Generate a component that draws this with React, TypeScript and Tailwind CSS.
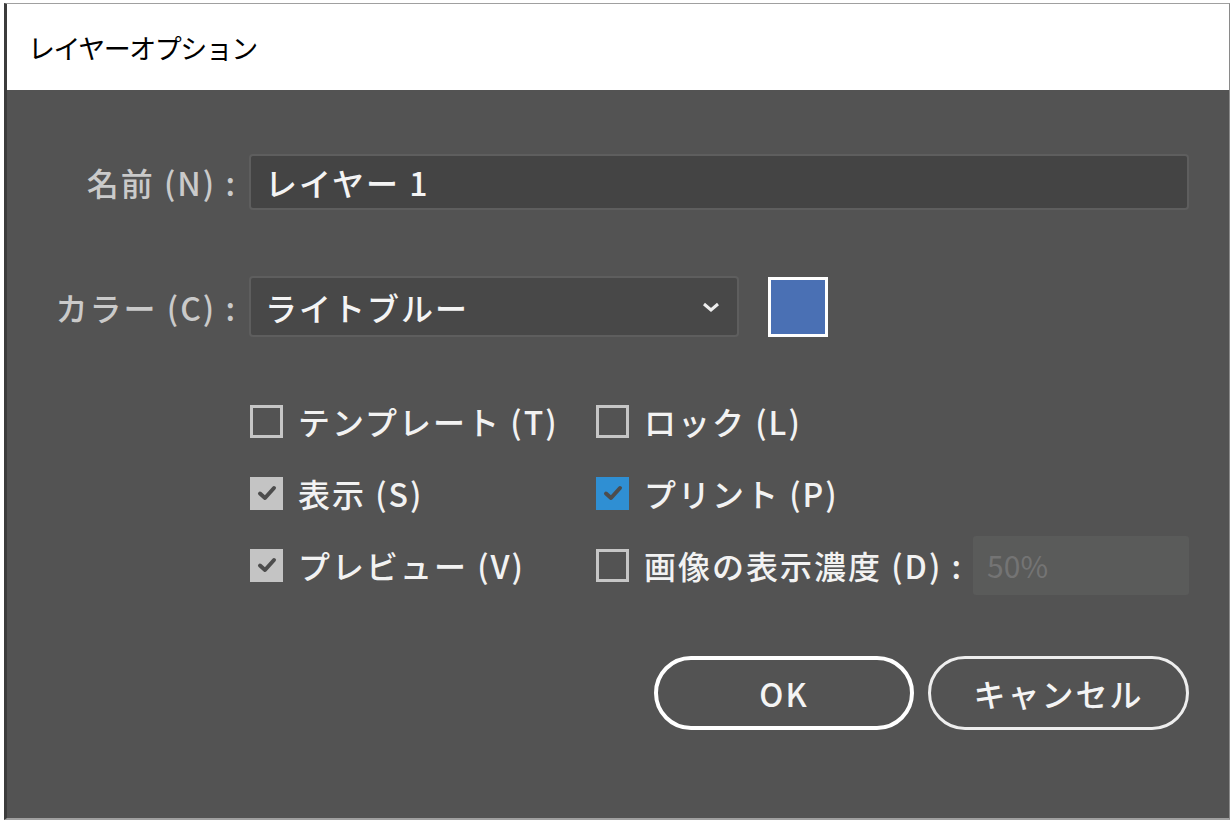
import React from 'react'

const jp = { fontFamily: '"Noto Sans CJK JP", "Noto Sans", sans-serif' }

function CheckBox({ state }: { state: 'off' | 'gray' | 'blue' }) {
  if (state === 'off') {
    return <span className="block h-[33px] w-[33px] shrink-0 border-[3px] border-[#c6c6c6]" />
  }
  const bg = state === 'blue' ? 'bg-[#2f8fd3]' : 'bg-[#c4c4c4]'
  return (
    <span className={`flex h-[33px] w-[33px] shrink-0 items-center justify-center ${bg}`}>
      <svg width="22" height="22" viewBox="0 0 22 22">
        <path d="M4 11.5 L9 16 L18 6" fill="none" stroke="#4d4d4d" strokeWidth="4" strokeLinecap="round" strokeLinejoin="round" />
      </svg>
    </span>
  )
}

function Option({ state, label }: { state: 'off' | 'gray' | 'blue'; label: string }) {
  return (
    <div className="flex items-center gap-[15px]">
      <CheckBox state={state} />
      <span className="whitespace-nowrap text-[32px] font-medium leading-none tracking-[2px] text-[#f2f2f2]">{label}</span>
    </div>
  )
}

export default function App() {
  return (
    <div className="h-[828px] w-[1232px] overflow-hidden bg-white pt-[3px] pl-[4px]" style={jp}>
      <div className="flex h-[817px] w-[1226px] flex-col border-t border-l-[3px] border-b-2 border-r border-t-[#a0a0a0] border-l-[#3c3c3c] border-b-[#a0a0a0] border-r-[#8a8a8a]">
        <div className="flex h-[86px] items-center bg-white pl-[21px]">
          <span className="text-[27px] leading-none tracking-[-1.5px] text-black">レイヤーオプション</span>
        </div>
        <div className="flex flex-1 flex-col bg-[#535353] pr-[40px] pt-[64px]">
          <div className="flex items-center">
            <div className="w-[232px] shrink-0 pr-[2px] text-right text-[32px] font-medium leading-none tracking-[2px] text-[#cacaca] whitespace-nowrap">名前 (N) :</div>
            <div className="ml-[10px] flex h-[56px] flex-1 items-center rounded-[4px] border-2 border-[#5e5e5e] bg-[#444444] pl-[14px] text-[32px] font-medium leading-none tracking-[2px] text-[#f4f4f4]">
              レイヤー 1
            </div>
          </div>

          <div className="mt-[66px] flex items-center">
            <div className="w-[232px] shrink-0 pr-[2px] text-right text-[32px] font-medium leading-none tracking-[2px] text-[#cacaca] whitespace-nowrap">カラー (C) :</div>
            <div className="ml-[10px] flex h-[61px] w-[490px] items-center justify-between rounded-[4px] border-2 border-[#5e5e5e] bg-[#484848] pl-[14px] pr-[16px]">
              <span className="text-[32px] font-medium leading-none tracking-[2px] text-[#f4f4f4]">ライトブルー</span>
              <svg width="20" height="12" viewBox="0 0 20 12">
                <path d="M3 3 L10 9 L17 3" fill="none" stroke="#eeeeee" strokeWidth="3" />
              </svg>
            </div>
            <div className="ml-[29px] h-[60px] w-[60px] border-[3px] border-white bg-[#4a70b4]" />
          </div>

          <div className="ml-[243px] mt-[48px] grid grid-cols-[346px_1fr] grid-rows-[72px_72px_72px]">
            <div className="flex items-center"><Option state="off" label="テンプレート (T)" /></div>
            <div className="flex items-center"><Option state="off" label="ロック (L)" /></div>
            <div className="flex items-center"><Option state="gray" label="表示 (S)" /></div>
            <div className="flex items-center"><Option state="blue" label="プリント (P)" /></div>
            <div className="flex items-center"><Option state="gray" label="プレビュー (V)" /></div>
            <div className="flex items-center">
              <Option state="off" label="画像の表示濃度 (D) :" />
              <div className="ml-[10px] flex h-[59px] flex-1 items-center rounded-[3px] bg-[#5a5b5a] pl-[14px] text-[30px] leading-none text-[#747474]">
                50%
              </div>
            </div>
          </div>

          <div className="mt-[55px] flex justify-end gap-[14px]">
            <button className="flex h-[74px] w-[260px] items-center justify-center rounded-full border-[4px] border-white text-[32px] font-medium leading-none tracking-[2px] text-[#f4f4f4]">
              OK
            </button>
            <button className="flex h-[74px] w-[261px] items-center justify-center rounded-full border-[3px] border-[#eeeeee] text-[32px] font-medium leading-none tracking-[2px] text-[#f4f4f4]">
              キャンセル
            </button>
          </div>
        </div>
      </div>
    </div>
  )
}
